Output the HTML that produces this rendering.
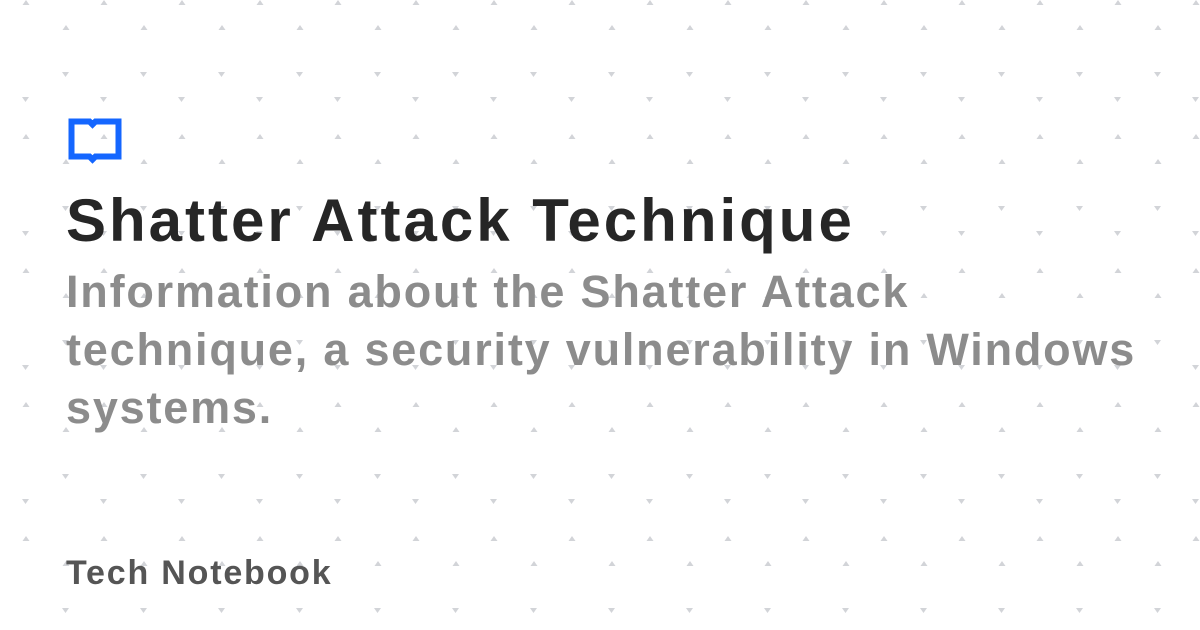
<!DOCTYPE html>
<html><head><meta charset="utf-8"><style>
html,body{margin:0;padding:0}
body{width:1200px;height:630px;background:#fff;position:relative;overflow:hidden;font-family:"Liberation Sans",sans-serif;font-weight:bold}
svg.bg{position:absolute;left:0;top:0}
.t{position:absolute;left:66px;top:186px;font-size:60px;color:#262626;letter-spacing:3px;white-space:nowrap}
.s{position:absolute;left:66px;top:263px;font-size:45px;line-height:58px;color:#8c8c8c;letter-spacing:1.8px;white-space:nowrap}
.f{position:absolute;left:66px;top:554px;font-size:34px;color:#555;letter-spacing:1.8px}
</style></head><body>
<svg class="bg" width="1200" height="630">
<defs>
<pattern id="p" x="44" y="0" width="78" height="134" patternUnits="userSpaceOnUse">
<path d="M18.5 30l3.5-5 3.5 5z M56.5 5l3.5-5 3.5 5z" fill="#d2d4d8"/>
<path d="M18 72h7l-3.5 5z M56 97h7l-3.5 5z" fill="#d2d4d8"/>
<path d="M56.5 140l3.5-5 3.5 5z" fill="#d2d4d8"/>
</pattern>
</defs>
<rect width="1200" height="630" fill="url(#p)"/>
<path d="M71.5 121.5h18l3 3l3-3h23v35h-23l-3 3l-3-3h-18z" fill="none" stroke="#1466ff" stroke-width="6" stroke-linejoin="miter"/>
</svg>
<div class="t">Shatter Attack Technique</div>
<div class="s">Information about the Shatter Attack<br>technique, a security vulnerability in Windows<br>systems.</div>
<div class="f">Tech Notebook</div>
</body></html>
